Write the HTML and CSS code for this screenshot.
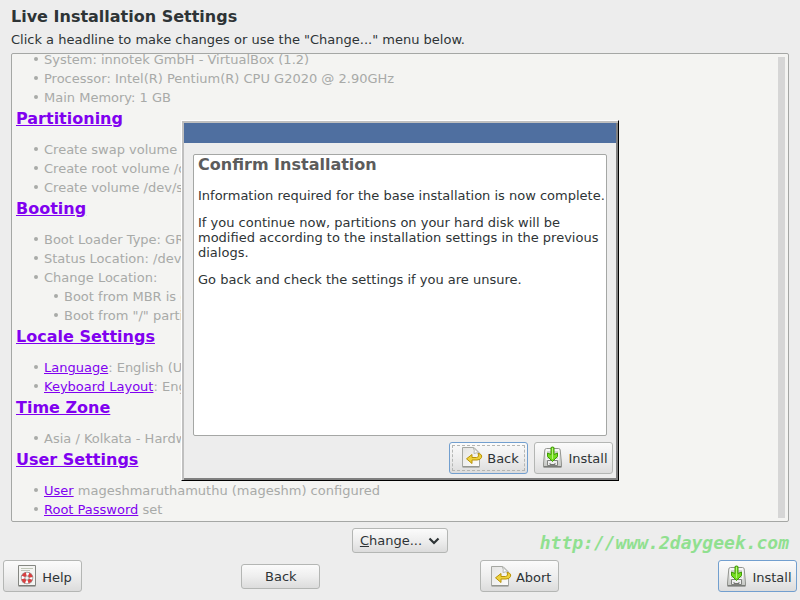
FILE: index.html
```html
<!DOCTYPE html>
<html lang="en">
<head>
<meta charset="utf-8">
<title>Live Installation Settings</title>
<link rel="stylesheet" href="styles.css">
</head>
<body>
<svg class="defs" aria-hidden="true">
  <defs>
    <linearGradient id="paper" x1="0" y1="0" x2="1" y2="1"><stop offset="0" stop-color="#e4e4e2"/><stop offset="1" stop-color="#fdfdfd"/></linearGradient>
    <linearGradient id="metal" x1="0" y1="0" x2="0" y2="1"><stop offset="0" stop-color="#fafafa"/><stop offset="1" stop-color="#c4c6c2"/></linearGradient>
    <symbol id="revert" viewBox="0 0 22 22">
      <path d="M1.500 1.500H13L18.500 7V20.500H1.500Z" fill="url(#paper)" stroke="#a5a7a2"/>
      <path d="M1.500 21H18.500" stroke="#858782"/>
      <path d="M12 1.500Q14 4 13 7.500Q16 6 18.500 7.500Z" fill="#fff" stroke="#b5b7b2"/>
      <path d="M17 7.500Q21.500 8 20.500 11.500Q19.500 14 16 14H11V17.500L5.500 12.800L11 8.500V11.500H15.500Q18.500 11 17 7.500Z" fill="#edd13c" stroke="#b99206"/>
    </symbol>
    <symbol id="install" viewBox="0 0 22 22">
      <path d="M4.500 2.500H16.500Q18 2.500 18.200 4L19.500 18V20.500H1.500V18L2.800 4Q3 2.500 4.500 2.500Z" fill="url(#metal)" stroke="#92948f"/>
      <path d="M1.500 21H19.500" stroke="#60625e"/>
      <path d="M4.500 4.500H16.500V13.500H4.500Z" fill="#d2d4d0" stroke="#f6f6f4"/>
      <path d="M5.500 14.500H15.500V19.500H5.500Z" fill="#eee" stroke="#80827e"/>
      <path d="M8 17V18.500H13V17" fill="none" stroke="#747672"/>
      <path d="M9 1.500Q10.500.5 12 1.500V8.500L15.500 7V10.500L10.500 15.500L5.500 10.500V7L9 8.500Z" fill="#73dc20" stroke="#409b05"/>
      <path d="M10.500 2V13" stroke="#b8f47c"/>
    </symbol>
    <symbol id="help" viewBox="0 0 22 22">
      <path d="M2.500.5H19.500V20.500H2.500Z" fill="#f4f4f2" stroke="#858782"/>
      <path d="M2.500 21H19.500" stroke="#70726e"/>
      <path d="M5 3.500H17M5 5.500H14" stroke="#bfc5b7"/>
      <circle cx="11" cy="13" r="4" fill="none" stroke="#888" stroke-width="4.500"/>
      <circle cx="11" cy="13" r="4" fill="none" stroke="#fff" stroke-width="3"/>
      <circle cx="11" cy="13" r="4" fill="none" stroke="#d84040" stroke-width="3.500" stroke-dasharray="3.700 2.583" stroke-dashoffset="-1.300"/>
    </symbol>
  </defs>
</svg>

<header class="header">
  <h1>Live Installation Settings</h1>
  <p>Click a headline to make changes or use the "Change..." menu below.</p>
</header>

<main class="summary">
  <div class="content">
    <ul>
      <li>System: innotek GmbH - VirtualBox (1.2)</li>
      <li>Processor: Intel(R) Pentium(R) CPU G2020 @ 2.90GHz</li>
      <li>Main Memory: 1 GB</li>
    </ul>
    <h2><a href="#partitioning">Partitioning</a></h2>
    <ul>
      <li>Create swap volume /</li>
      <li>Create root volume /d</li>
      <li>Create volume /dev/s</li>
    </ul>
    <h2><a href="#booting">Booting</a></h2>
    <ul>
      <li>Boot Loader Type: GR</li>
      <li>Status Location: /dev/</li>
      <li>Change Location:
        <ul>
          <li>Boot from MBR is d</li>
          <li>Boot from "/" partit</li>
        </ul>
      </li>
    </ul>
    <h2><a href="#locale">Locale Settings</a></h2>
    <ul>
      <li><a href="#language">Language</a>: English (US</li>
      <li><a href="#keyboard">Keyboard Layout</a>: Eng</li>
    </ul>
    <h2><a href="#timezone">Time Zone</a></h2>
    <ul>
      <li>Asia / Kolkata - Hardw</li>
    </ul>
    <h2><a href="#users">User Settings</a></h2>
    <ul>
      <li><a href="#user">User</a> mageshmaruthamuthu (mageshm) configured</li>
      <li><a href="#root">Root Password</a> set</li>
    </ul>
  </div>
  <div class="scrollbar"></div>
</main>

<div class="change-row">
  <button class="btn small change" type="button"><span><u>C</u>hange...</span>
    <svg class="chevron" viewBox="0 0 12 8" aria-hidden="true"><path d="M1.500 1.500L6 6L10.500 1.500" fill="none" stroke="#2e3436" stroke-width="2.200"/></svg>
  </button>
  <span class="watermark">http://www.2daygeek.com</span>
</div>

<footer class="actions">
  <button class="btn" type="button"><svg class="icon" aria-hidden="true"><use href="#help"/></svg>Help</button>
  <button class="btn small" type="button">Back</button>
  <button class="btn" type="button"><svg class="icon" aria-hidden="true"><use href="#revert"/></svg>Abort</button>
  <button class="btn default" type="button"><svg class="icon" aria-hidden="true"><use href="#install"/></svg>Install</button>
</footer>

<div class="overlay">
  <section class="dialog" role="dialog" aria-labelledby="confirm-title">
    <div class="titlebar"></div>
    <div class="dialog-body">
      <div class="message">
        <h2 id="confirm-title">Confirm Installation</h2>
        <p>Information required for the base installation is now complete.</p>
        <p>If you continue now, partitions on your hard disk will be modified according to the installation settings in the previous dialogs.</p>
        <p>Go back and check the settings if you are unsure.</p>
      </div>
      <div class="dialog-actions">
        <button class="btn default focused" type="button"><svg class="icon" aria-hidden="true"><use href="#revert"/></svg>Back</button>
        <button class="btn" type="button"><svg class="icon" aria-hidden="true"><use href="#install"/></svg>Install</button>
      </div>
    </div>
  </section>
</div>
</body>
</html>
```
FILE: styles.css
```css
* { box-sizing: border-box; }

body {
  margin: 0;
  height: 100vh;
  display: flex;
  flex-direction: column;
  background: #ededed;
  color: #2e3436;
  font: 13px/15px "DejaVu Sans", sans-serif;
}

h1, h2, p, ul { margin: 0; }
.defs { position: absolute; width: 0; height: 0; }

.header { padding: 7px 11px 5px; }
.header h1 { font-size: 16px; line-height: 20px; margin-bottom: 5px; }
.header p { line-height: 16px; }

.summary {
  flex: 1;
  min-height: 0;
  margin: 0 11px;
  display: flex;
  border: 1px solid #a5a7a5;
  border-radius: 2px;
  background: #f4f4f2;
  color: #a8aaa8;
}
.content {
  flex: 1;
  min-width: 0;
  padding: 0 4px 2px;
  display: flex;
  flex-direction: column;
  justify-content: flex-end;
  overflow: hidden;
}
.content h2 { font-size: 16px; line-height: 23px; margin-bottom: 10px; }
.content ul { list-style: none; padding-left: 28px; line-height: 19px; }
.content ul ul { padding-left: 20px; }
.content li { position: relative; }
.content li::before {
  content: "";
  position: absolute;
  left: -10px;
  top: 7px;
  width: 4px;
  height: 4px;
  border-radius: 50%;
  background: #a8aaa8;
}
.content a { color: #8000f0; }
.scrollbar { width: 7px; margin: 3px 3px 3px 0; background: #d6d6d6; }

.change-row {
  display: grid;
  grid-template-columns: 1fr auto 1fr;
  align-items: center;
  padding: 6px 11px 7px;
}
.change { grid-column: 2; }
.watermark {
  justify-self: end;
  color: #90e090;
  font: italic bold 18px/20px "DejaVu Sans Mono", monospace;
  margin-top: 5px;
}

.actions {
  display: flex;
  justify-content: space-between;
  align-items: center;
  padding: 0 3px 8px;
}

.btn {
  position: relative;
  display: flex;
  align-items: center;
  justify-content: center;
  gap: 4px;
  min-width: 79px;
  height: 32px;
  margin: 0;
  padding: 2px 4px 0 7px;
  border: 1px solid #b4b6b4;
  border-radius: 3px;
  background: linear-gradient(#fbfbfb, #eeeeee 50%, #dcdcdc);
  color: #2e3436;
  font: inherit;
}
.btn.small { height: 25px; padding: 0 7px; }
.btn.change { min-width: 96px; gap: 6px; }
.btn.default { border-color: #729fcf; }
.btn.focused::after {
  content: "";
  position: absolute;
  inset: 2px;
  border: 1px dashed #b4b6b4;
}
.icon { width: 22px; height: 22px; margin-top: -3px; flex: none; }
.chevron { width: 12px; height: 8px; }

.overlay {
  position: fixed;
  inset: 0;
  display: flex;
  align-items: center;
  justify-content: center;
}
.dialog {
  display: flex;
  flex-direction: column;
  width: 438px;
  max-width: 100%;
  min-height: 361px;
  border: 1px solid;
  border-color: #fff #000 #000 #fff;
  box-shadow: inset 2px 2px #c0c0c0, inset -2px -2px #808080;
  background: #ededed;
  padding: 2px;
}
.titlebar { height: 20px; background: #4f6fa0; }
.dialog-body { flex: 1; display: flex; flex-direction: column; padding: 11px 3px 4px 9px; }
.message {
  flex: 1;
  margin-right: 6px;
  padding: 0 0 0 4px;
  border: 1px solid #a5a7a5;
  border-radius: 2px;
  background: #fff;
}
.message h2 { font-size: 16px; line-height: 19px; margin-bottom: 14px; color: #5c5c5c; }
.message p { margin-bottom: 12px; }
.dialog-actions { display: flex; justify-content: flex-end; gap: 6px; margin-top: 6px; }
```
